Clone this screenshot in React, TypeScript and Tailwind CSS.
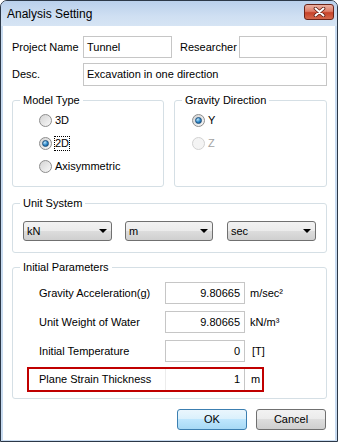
import React from 'react';

// Win7-style "Analysis Setting" dialog

interface TextBoxProps {
  value?: string;
  className?: string;
  right?: boolean;
}

const TextBox: React.FC<TextBoxProps> = ({ value = '', className = '', right }) => (
  <div
    className={`flex h-[22px] items-center border border-[#c6c6c6] bg-white ${right ? 'justify-end pr-[4px]' : 'pl-[3px]'} ${className}`}
  >
    <span className="leading-[13px]">{value}</span>
  </div>
);

interface RadioProps {
  label: string;
  checked?: boolean;
  disabled?: boolean;
  focused?: boolean;
}

const Radio: React.FC<RadioProps> = ({ label, checked, disabled, focused }) => (
  <div className="flex h-[23px] items-center gap-[2px]">
    <span
      className={`flex h-[13px] w-[13px] items-center justify-center rounded-full border ${
        disabled
          ? 'border-[#d2d2d2] bg-[#f4f4f4]'
          : 'border-[#8d8d8d] bg-[linear-gradient(135deg,#d4d4d4,#f8f8f8)]'
      }`}
    >
      {checked && (
        <span className="h-[7px] w-[7px] rounded-full border border-[#1d4f7c] bg-[radial-gradient(circle_at_35%_30%,#bfe6fb,#2a86c8_55%,#0f4b82)]" />
      )}
    </span>
    <span
      className={`border border-dotted leading-[13px] ${focused ? 'border-black' : 'border-transparent'} ${
        disabled ? 'text-[#a3a3a3]' : ''
      }`}
    >
      {label}
    </span>
  </div>
);

const Combo: React.FC<{ value: string; className?: string }> = ({ value, className = '' }) => (
  <div
    className={`flex h-[20px] items-center justify-between rounded-[3px] border border-[#707070] bg-[linear-gradient(#f2f2f2_0%,#ebebeb_50%,#dddddd_50%,#cfcfcf_100%)] pl-[3px] pr-[4px] ${className}`}
  >
    <span className="leading-[13px]">{value}</span>
    <svg width="8" height="4" viewBox="0 0 8 4">
      <path d="M0 0 H8 L4 4 Z" fill="#000" />
    </svg>
  </div>
);

const GroupBox: React.FC<{ title: string; className?: string; children?: React.ReactNode }> = ({
  title,
  className = '',
  children,
}) => (
  <div className={`relative rounded-[3px] border border-[#d5dfe5] ${className}`}>
    <span className="absolute -top-[8px] left-[7px] bg-white px-[3px] leading-[14px]">{title}</span>
    {children}
  </div>
);

const WinButton: React.FC<{ label: string; primary?: boolean }> = ({ label, primary }) => (
  <button
    className={`flex h-[21px] w-[70px] items-center justify-center rounded-[3px] border ${
      primary
        ? 'border-[#3c7fb1] bg-[linear-gradient(#eaf6fd_0%,#d9f0fc_50%,#bee6fd_50%,#a7d9f5_100%)]'
        : 'border-[#707070] bg-[linear-gradient(#f2f2f2_0%,#ebebeb_50%,#dddddd_50%,#cfcfcf_100%)]'
    }`}
  >
    <span className="leading-[13px]">{label}</span>
  </button>
);

const ParamRow: React.FC<{ label: string; value: string; unit: React.ReactNode; unitGap?: string }> = ({
  label,
  value,
  unit,
  unitGap = 'ml-[5px]',
}) => (
  <div className="flex h-[22px] items-center pl-[12px]">
    <span className="w-[126px] leading-[13px]">{label}</span>
    <TextBox value={value} right className="w-[80px]" />
    <span className={`${unitGap} leading-[13px]`}>{unit}</span>
  </div>
);

export default function App() {
  return (
    <div className="h-[442px] w-[339px] bg-white font-['Liberation_Sans',Arial,sans-serif] text-[11px] text-black">
      <div className="flex h-[442px] w-[338px] flex-col rounded-t-[7px] border border-[#2c3848] bg-[#c8dbf0]">
        {/* Title bar */}
        <div className="flex h-[25px] items-center justify-between rounded-t-[6px] bg-[linear-gradient(#b9d0ec,#cfdff2_60%,#d6e4f4)] pl-[6px] pr-[3px]">
          <span className="text-[12px] leading-[14px] text-black">Analysis Setting</span>
          <div className="mb-[4px] flex h-[16px] w-[30px] items-center justify-center rounded-[3px] border border-[#6b2318] bg-[linear-gradient(#eab0a2_0%,#de7d68_45%,#c7432a_55%,#d4684c_100%)]">
            <svg width="13" height="10" viewBox="0 0 13 10">
              <path d="M2.5 1.5 L10.5 8.5 M10.5 1.5 L2.5 8.5" stroke="#5c1c12" strokeWidth="3.6" strokeLinecap="round" />
              <path d="M2.5 1.5 L10.5 8.5 M10.5 1.5 L2.5 8.5" stroke="#ffffff" strokeWidth="2" strokeLinecap="round" />
            </svg>
          </div>
        </div>

        {/* Client area */}
        <div className="mx-[2px] mb-[1px] flex flex-1 flex-col bg-white pl-[9px]">
          {/* Project / researcher */}
          <div className="mt-[10px] flex h-[22px] items-center">
            <span className="w-[71px] leading-[13px]">Project Name</span>
            <TextBox value="Tunnel" className="w-[89px]" />
            <span className="ml-[8px] w-[59px] leading-[13px]">Researcher</span>
            <TextBox className="w-[88px]" />
          </div>
          <div className="mt-[5px] flex h-[23px] items-center">
            <span className="w-[71px] leading-[13px]">Desc.</span>
            <TextBox value="Excavation in one direction" className="h-[23px] w-[244px]" />
          </div>

          {/* Model type / gravity */}
          <div className="mt-[14px] flex gap-[10px]">
            <GroupBox title="Model Type" className="h-[87px] w-[152px]">
              <div className="flex flex-col pl-[26px] pt-[8px]">
                <Radio label="3D" />
                <Radio label="2D" checked focused />
                <Radio label="Axisymmetric" />
              </div>
            </GroupBox>
            <GroupBox title="Gravity Direction" className="h-[87px] w-[153px]">
              <div className="flex flex-col pl-[17px] pt-[8px]">
                <Radio label="Y" checked />
                <Radio label="Z" disabled />
              </div>
            </GroupBox>
          </div>

          {/* Units */}
          <GroupBox title="Unit System" className="mt-[16px] h-[50px] w-[315px]">
            <div className="flex pl-[10px] pt-[17px]">
              <Combo value="kN" className="w-[89px]" />
              <Combo value="m" className="ml-[13px] w-[88px]" />
              <Combo value="sec" className="ml-[14px] w-[89px]" />
            </div>
          </GroupBox>

          {/* Initial parameters */}
          <GroupBox title="Initial Parameters" className="mt-[14px] h-[132px] w-[315px]">
            <div className="flex flex-col gap-[7px] pl-[14px] pt-[14px]">
              <ParamRow label="Gravity Acceleration(g)" value="9.80665" unit="m/sec²" />
              <ParamRow label="Unit Weight of Water" value="9.80665" unit="kN/m³" />
              <ParamRow label="Initial Temperature" value="0" unit="[T]" unitGap="ml-[7px]" />
            </div>
            <div className="ml-[14px] mt-[5px] flex h-[25px] w-[237px] items-center border-2 border-[#c00000]">
              <span className="w-[136px] pl-[10px] leading-[13px]">Plane Strain Thickness</span>
              <div className="flex h-full w-[80px] items-center justify-end border-l border-r border-l-[#ececec] border-r-[#c6c6c6] pr-[4px]">
                <span className="leading-[13px]">1</span>
              </div>
              <span className="ml-[6px] leading-[13px]">m</span>
            </div>
          </GroupBox>

          {/* Buttons */}
          <div className="mt-[10px] flex gap-[9px] pl-[165px]">
            <WinButton label="OK" primary />
            <WinButton label="Cancel" />
          </div>
        </div>
      </div>
    </div>
  );
}
